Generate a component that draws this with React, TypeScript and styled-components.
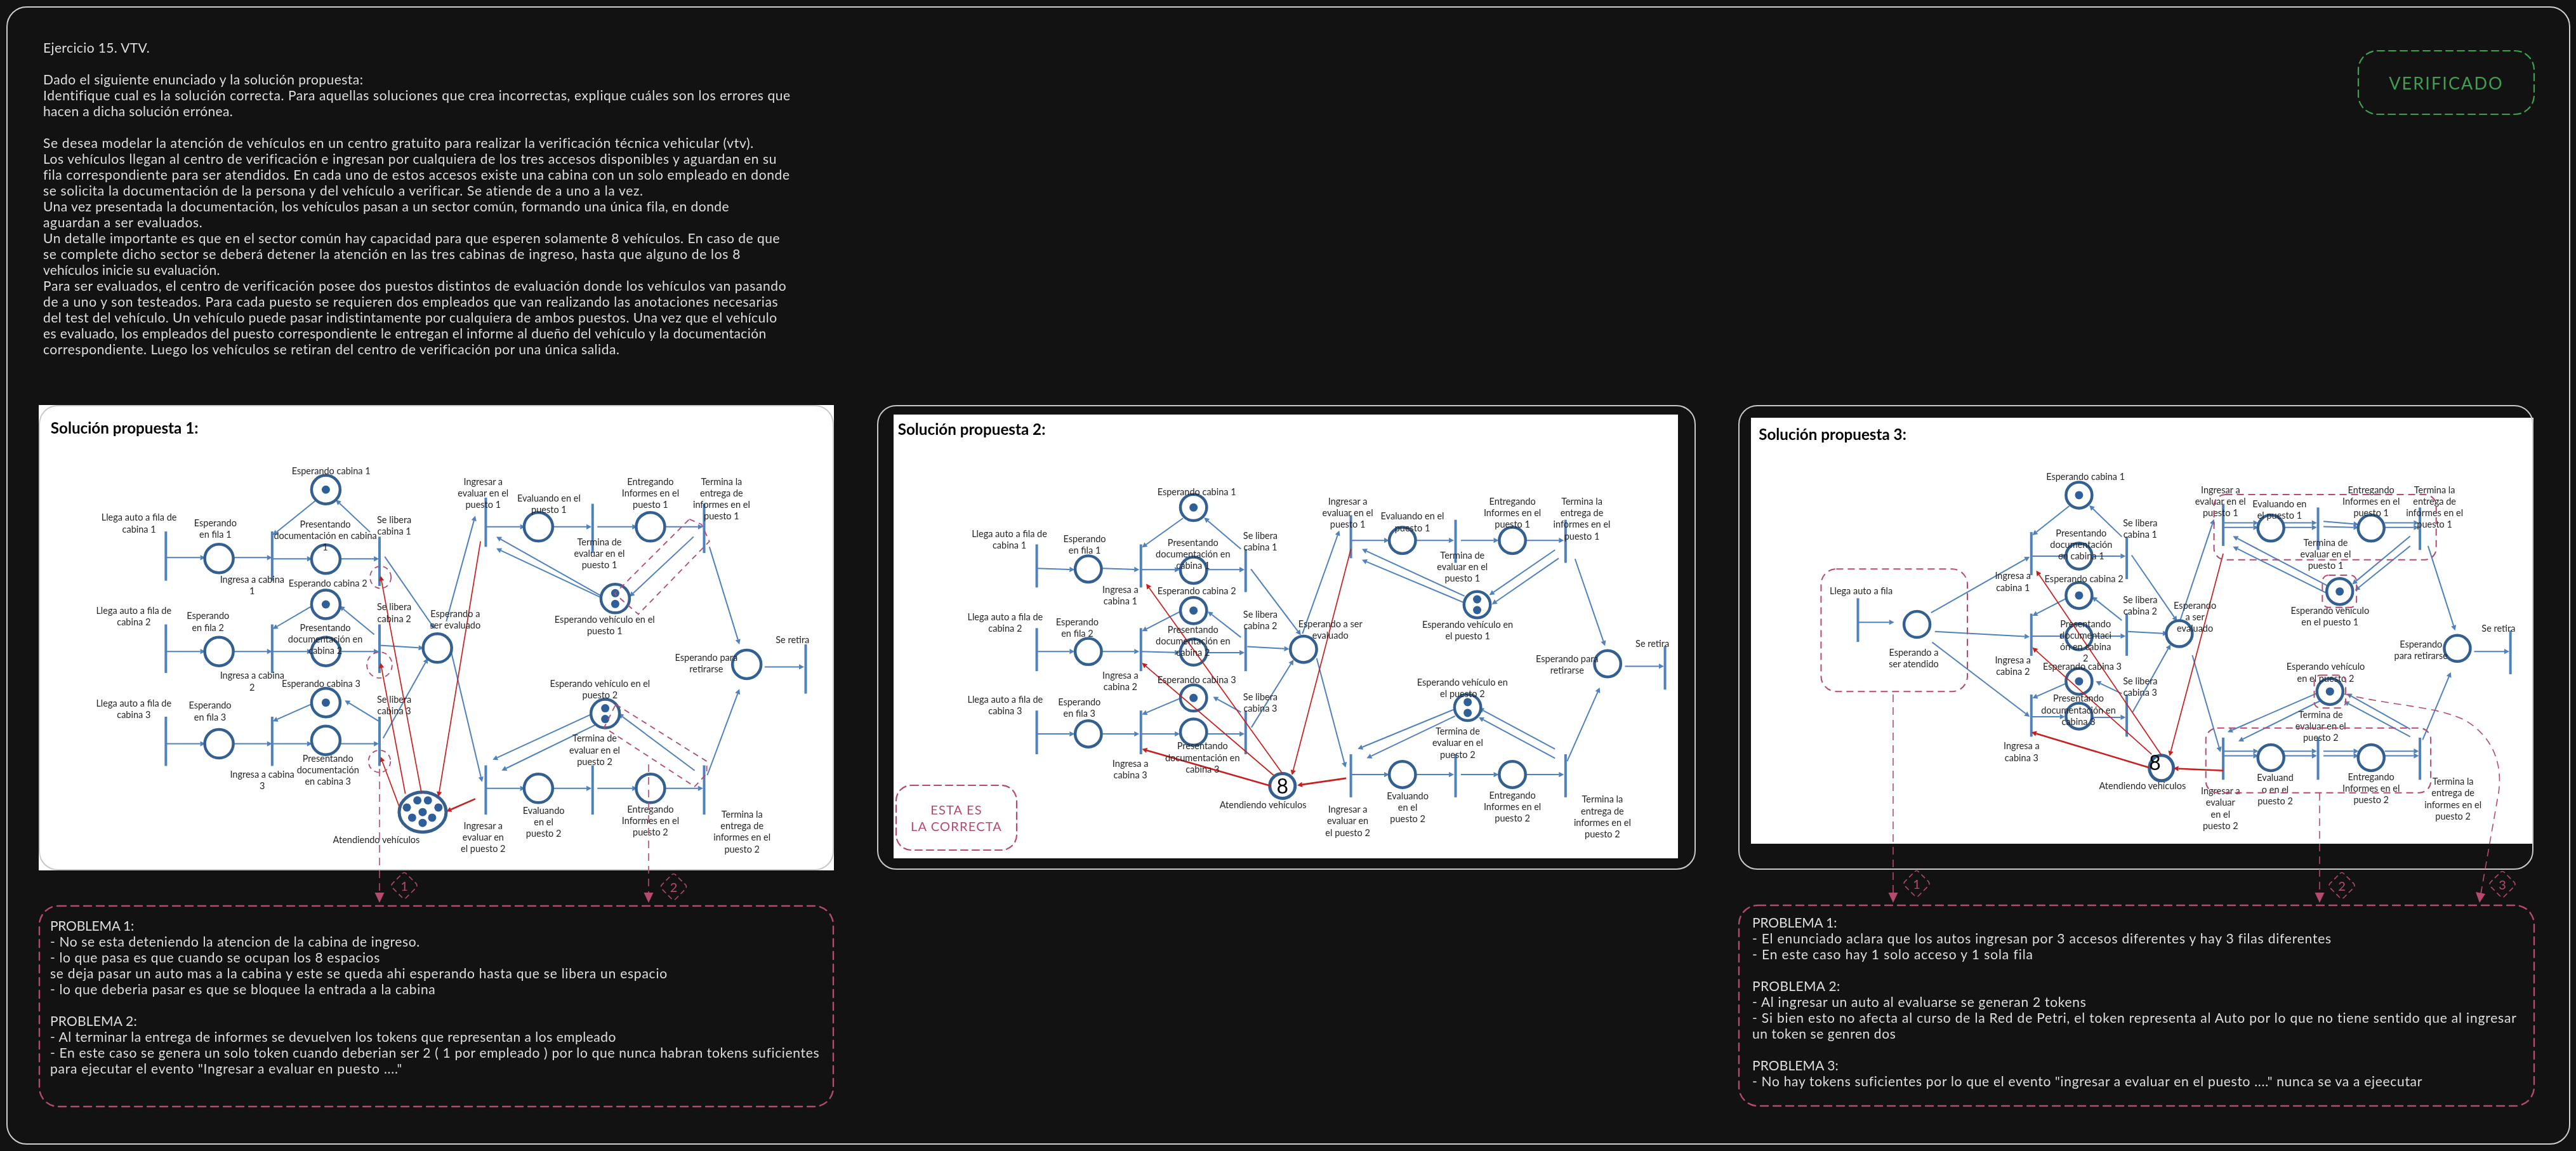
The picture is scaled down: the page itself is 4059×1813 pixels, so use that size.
import React from "react";
import styled, { createGlobalStyle } from "styled-components";

const INK = "#dedede";
const PINK = "#b54a70";
const GREEN = "#3d9f50";
const HAND = `Lato, "Open Sans", sans-serif`;
const TEXT_SIZE = 21;

const Global = createGlobalStyle`
  html, body { margin: 0; padding: 0; background: #121212; }
  body { width: 4059px; height: 1813px; overflow: hidden; }
`;

const Page = styled.div`
  position: relative;
  width: 4059px;
  height: 1813px;
  padding: 10px;
  box-sizing: border-box;
  background: #121212;
  font-family: ${HAND};
`;
const Board = styled.main`
  box-sizing: border-box;
  width: 4040px;
  height: 1793px;
  padding: 50px 54px 0 49px;
  border: 2px solid #cfcfcf;
  border-radius: 32px;
`;
const TopRow = styled.header`
  display: flex;
  justify-content: space-between;
  align-items: flex-start;
  height: 500px;
  margin-bottom: 76px;
`;
const Statement = styled.section`
  padding-left: 7px;
  color: ${INK};
  will-change: transform;
`;
const TextLine = styled.div`
  font-size: ${TEXT_SIZE}px;
  line-height: 25px;
  min-height: 25px;
  white-space: pre;
`;
const Solutions = styled.div`
  display: grid;
  grid-template-columns: 1253px 1290px 1255px;
  column-gap: 67.5px;
  align-items: start;
`;
const Column = styled.div`
  display: flex;
  flex-direction: column;
  gap: 55px;
`;
const Card = styled.article<{ $pad: string; $h: number; $w?: number }>`
  position: relative;
  box-sizing: border-box;
  display: flex;
  height: ${(p) => p.$h}px;
  width: ${(p) => (p.$w ? `${p.$w}px` : "100%")};
  padding: ${(p) => p.$pad};
  &::after {
    content: "";
    position: absolute;
    inset: 0;
    border: 2px solid #c9c9c9;
    border-radius: 30px;
    pointer-events: none;
  }
`;
const Sheet = styled.div`
  flex: 1;
  background: #ffffff;
  overflow: hidden;
`;
const NetSvg = styled.svg`
  display: block;
`;
const NetLayer = styled.g`
  filter: blur(0.55px);
`;
const NetLabel = styled.text`
  font-family: Lato, sans-serif;
  font-size: 14.5px;
  fill: #262626;
  text-anchor: middle;
  dominant-baseline: central;
`;
const NetTitle = styled.text`
  font-family: Lato, sans-serif;
  font-size: 24.2px;
  font-weight: 700;
  fill: #000;
  dominant-baseline: central;
`;
const BigEight = styled.text`
  font-family: Lato, sans-serif;
  font-size: 32px;
  fill: #000;
  text-anchor: middle;
  dominant-baseline: central;
`;
const OutlineSvg = styled.svg`
  position: absolute;
  top: 0;
  left: 0;
  overflow: visible;
`;
const ProblemBox = styled.section<{ $padTop: number; $padLeft: number }>`
  position: relative;
  box-sizing: border-box;
  height: 318px;
  padding: ${(p) => p.$padTop}px 8px 0 ${(p) => p.$padLeft}px;
  color: ${INK};
  will-change: transform;
`;
const Verified = styled.div`
  position: relative;
  box-sizing: border-box;
  width: 279px;
  height: 102px;
  margin-top: 17px;
  display: flex;
  align-items: center;
  justify-content: center;
  color: ${GREEN};
  font-size: 27px;
  font-weight: 400;
  letter-spacing: 2.1px;
  will-change: transform;
`;
const Correct = styled.div`
  position: absolute;
  left: 3px;
  bottom: 12px;
  box-sizing: border-box;
  width: 192px;
  height: 104px;
  display: flex;
  flex-direction: column;
  align-items: center;
  justify-content: center;
  color: ${PINK};
  font-size: 20px;
  font-weight: 400;
  line-height: 26px;
  letter-spacing: 1.2px;
  will-change: transform;
`;
const CorrectBody = styled.div`
  position: relative;
  flex: 1;
  display: flex;
`;
const OverlaySvg = styled.svg`
  position: absolute;
  top: 0;
  left: 0;
  pointer-events: none;
`;
const BadgeDigit = styled.text`
  font-family: ${HAND};
  font-size: 20px;
  fill: ${PINK};
  text-anchor: middle;
  dominant-baseline: central;
`;

/* ---------- dashed rounded outline, a drawing that sits over its box ---------- */
function DashedOutline({ w, h, color, r = 30, width = 2.4, dash = "12 8" }: { w: number; h: number; color: string; r?: number; width?: number; dash?: string }) {
  return (
    <OutlineSvg width={w} height={h} viewBox={`0 0 ${w} ${h}`}>
      <rect x={1} y={1} width={w - 2} height={h - 2} rx={r} fill="none" stroke={color} strokeWidth={width} strokeDasharray={dash} strokeLinecap="round" />
    </OutlineSvg>
  );
}

/* ---------- Petri nets. All measures are read off 1568-wide crops of each sheet ---------- */
type Pt = [number, number];
interface Net {
  title: string;
  titleAt: Pt;
  ox: number;
  oy: number;
  fx: number;
  sheet: [number, number, number, number];
  r: number;
  bars: [number, number, number][];
  places: [number, number, number?][];
  blue: [number, number, number, number][];
  red: [number, number, number, number, number?][];
  labels: [number, number, string][];
  pool: { cx: number; cy: number; rx: number; ry: number; tokens?: Pt[]; eight?: Pt };
}
const FY = 760 / 1568;

const net1: Net = {
  title: "Solución propuesta 1:", titleAt: [48, 110], ox: 40, oy: 620, fx: 1300 / 1568, sheet: [61, 638, 1253, 733], r: 22.5,
  bars: [[267,448,608],[267,750,908],[267,1050,1210],[469,448,608],[469,750,908],[469,1050,1210],[673,465,625],[673,750,908],[673,1050,1210],[875,338,498],[875,1208,1368],[1078,358,518],[1078,1208,1368],[1290,358,518],[1290,1208,1368],[1483,815,975]],
  places: [[368,536],[368,838],[368,1138],[571,312,1],[571,538],[571,685,1],[571,838],[571,1004,1],[571,1127],[783,827],[975,433],[1188,433],[1121,666,2],[1371,880],[975,1283],[1188,1283],[1102,1040,2]],
  blue: [[267,533,342,533],[395,533,469,533],[469,537,545,537],[597,537,672,537],[552,347,470,460],[655,450,590,345],[683,530,778,765],
    [267,838,342,838],[395,838,469,838],[469,838,545,838],[597,838,672,838],[545,690,470,765],[663,783,597,690],[673,818,757,827],
    [267,1138,342,1138],[395,1138,469,1138],[469,1138,545,1138],[597,1138,672,1138],[545,1008,470,1065],[672,1065,607,997],[680,1120,765,860],
    [800,740,855,397],[808,830,868,1262],[875,433,950,433],[1002,433,1076,433],[1087,433,1163,433],[1215,433,1288,433],
    [1097,660,895,465],[1097,665,895,503],[1270,465,1148,660],[1300,498,1357,815],[1405,888,1480,888],
    [875,1283,950,1283],[1002,1283,1076,1283],[1087,1283,1163,1283],[1215,1283,1288,1283],
    [1078,1040,888,1190],[1085,1075,905,1225],[1272,1225,1127,1040],[1296,1240,1357,960]],
  red: [[753,1300,675,592],[722,1300,675,875],[710,1340,675,1180],[865,480,785,1310],[855,1317,800,1358,1]],
  labels: [[581,250,"Esperando cabina 1"],[216,402,"Llega auto a fila de|cabina 1"],[361,420,"Esperando|en fila 1"],[570,424,"Presentando|documentación en cabina|1"],[701,410,"Se libera|cabina 1"],[431,604,"Ingresa a cabina|1"],[575,615,"Esperando cabina 2"],[206,704,"Llega auto a fila de|cabina 2"],[347,722,"Esperando|en fila 2"],[570,760,"Presentando|documentación en|cabina 2"],[701,693,"Se libera|cabina 2"],[431,916,"Ingresa a cabina|2"],[562,941,"Esperando cabina 3"],[206,1005,"Llega auto a fila de|cabina 3"],[351,1013,"Esperando|en fila 3"],[701,994,"Se libera|cabina 3"],[575,1185,"Presentando|documentación|en cabina 3"],[450,1237,"Ingresa a cabina|3"],[667,1449,"Atendiendo vehículos"],[817,715,"Esperando a|ser evaluado"],[870,285,"Ingresar a|evaluar en el|puesto 1"],[995,339,"Evaluando en el|puesto 1"],[1188,285,"Entregando|Informes en el|puesto 1"],[1323,285,"Termina la|entrega de|informes en el|puesto 1"],[1091,481,"Termina de|evaluar en el|puesto 1"],[1101,733,"Esperando vehículo en el|puesto 1"],[1294,857,"Esperando para|retirarse"],[1458,800,"Se retira"],[1092,942,"Esperando vehículo en el|puesto 2"],[1082,1120,"Termina de|evaluar en el|puesto 2"],[985,1354,"Evaluando|en el|puesto 2"],[1188,1350,"Entregando|Informes en el|puesto 2"],[870,1403,"Ingresar a|evaluar en|el puesto 2"],[1362,1367,"Termina la|entrega de|informes en el|puesto 2"]],
  pool: { cx: 755, cy: 1360, rx: 37, ry: 31.5, tokens: [[725,1345],[745,1322],[765,1322],[785,1345],[755,1360],[735,1378],[773,1378],[755,1395]] },
};

const net2: Net = {
  title: "Solución propuesta 2:", titleAt: [66, 115], ox: 1360, oy: 620, fx: 1300 / 1568, sheet: [1408, 653, 1236, 699], r: 20.7,
  bars: [[330,490,630],[330,762,902],[330,1030,1172],[528,490,630],[528,762,902],[528,1030,1172],[727,505,645],[727,762,902],[727,1030,1172],[927,395,535],[927,1172,1312],[1126,410,550],[1126,1172,1312],[1335,410,550],[1335,1172,1312],[1524,820,962]],
  places: [[428,570],[428,838],[428,1106],[628,370,1],[628,574],[628,705,1],[628,840],[628,989,1],[628,1100],[837,831],[1025,477],[1234,477],[1167,686,2],[1415,878],[1025,1238],[1234,1238],[1149,1020,2]],
  blue: [[330,568,402,572],[455,568,525,572],[528,572,602,572],[655,572,725,572],[608,405,530,500],[718,505,648,403],[737,570,832,785],
    [330,838,402,838],[455,838,525,838],[528,838,602,842],[655,842,725,842],[603,708,530,772],[718,792,655,708],[730,822,810,830],
    [330,1106,402,1106],[455,1106,525,1106],[528,1106,602,1106],[655,1106,725,1106],[603,990,530,1043],[718,1035,665,985],[738,1085,818,865],
    [835,780,905,445],[862,860,917,1215],[927,477,1000,477],[1052,477,1123,477],[1136,477,1208,477],[1260,477,1332,477],
    [1143,658,948,505],[1143,680,948,540],[1315,508,1190,655],[1322,535,1195,685],[1353,537,1410,820],[1448,886,1522,886],
    [927,1238,1000,1238],[1052,1238,1123,1238],[1136,1238,1208,1238],[1260,1238,1332,1238],
    [1125,1025,940,1155],[1125,1048,957,1185],[1315,1155,1170,1022],[1315,1185,1170,1052],[1338,1195,1400,955]],
  red: [[797,1235,538,618],[780,1240,530,875],[775,1275,530,1155,1],[927,505,815,1240],[918,1250,825,1273,1]],
  labels: [[634,318,"Esperando cabina 1"],[278,455,"Llega auto a fila de|cabina 1"],[421,471,"Esperando|en fila 1"],[627,483,"Presentando|documentación en|cabina 1"],[755,461,"Se libera|cabina 1"],[489,636,"Ingresa a|cabina 1"],[634,640,"Esperando cabina 2"],[270,725,"Llega auto a fila de|cabina 2"],[407,741,"Esperando|en fila 2"],[627,766,"Presentando|documentación en|cabina 2"],[755,716,"Se libera|cabina 2"],[489,915,"Ingresa a|cabina 2"],[634,929,"Esperando cabina 3"],[270,994,"Llega auto a fila de|cabina 3"],[411,1001,"Esperando|en fila 3"],[755,985,"Se libera|cabina 3"],[645,1145,"Presentando|documentación en|cabina 3"],[508,1201,"Ingresa a|cabina 3"],[760,1335,"Atendiendo vehículos"],[888,747,"Esperando a ser|evaluado"],[921,350,"Ingresar a|evaluar en el|puesto 1"],[1044,398,"Evaluando en el|puesto 1"],[1234,350,"Entregando|Informes en el|puesto 1"],[1366,350,"Termina la|entrega de|informes en el|puesto 1"],[1139,525,"Termina de|evaluar en el|puesto 1"],[1149,750,"Esperando vehículo en|el puesto 1"],[1338,862,"Esperando para|retirarse"],[1500,811,"Se retira"],[1139,937,"Esperando vehículo en|el puesto 2"],[1130,1097,"Termina de|evaluar en el|puesto 2"],[1035,1306,"Evaluando|en el|puesto 2"],[1234,1304,"Entregando|Informes en el|puesto 2"],[921,1351,"Ingresar a|evaluar en|el puesto 2"],[1405,1318,"Termina la|entrega de|informes en el|puesto 2"]],
  pool: { cx: 797, cy: 1275, rx: 20, ry: 19.5, eight: [797, 1273] },
};

const net3: Net = {
  title: "Solución propuesta 3:", titleAt: [60, 130], ox: 2720, oy: 620, fx: 1339 / 1568, sheet: [2759, 658, 1233, 671], r: 20.5,
  bars: [[243,665,807],[563,450,590],[563,715,852],[563,978,1115],[739,465,603],[739,715,852],[739,978,1115],[917,358,495],[917,1118,1255],[1092,370,508],[1092,1118,1255],[1280,370,508],[1280,1118,1255],[1447,770,912]],
  places: [[352,750],[651,330,1],[651,528],[651,656,1],[651,790],[651,935,1],[651,1048],[836,780],[1005,437],[1190,437],[1132,643,1],[1349,828],[1005,1183],[1190,1183],[1114,968,1]],
  blue: [[243,743,310,743],[378,712,560,530],[385,773,560,790],[380,808,560,1050],[563,528,628,528],[672,528,737,528],[633,365,565,460],[730,465,670,363],[748,525,832,740],
    [563,788,625,788],[672,788,737,788],[628,665,565,722],[730,737,675,660],[741,773,815,780],
    [563,1050,625,1050],[672,1052,737,1052],[632,938,565,990],[730,975,682,935],[750,1035,820,815],
    [838,735,900,408],[860,850,912,1165],
    [917,420,982,420],[917,435,982,435],[1027,420,1090,420],[1027,435,1090,435],[1102,415,1167,425],[1102,432,1167,435],[1215,420,1278,420],[1215,435,1278,435],
    [1110,625,935,463],[1110,650,935,497],[1262,463,1155,620],[1262,495,1160,640],[1295,495,1345,770],[1380,838,1445,838],
    [917,1162,982,1162],[917,1177,982,1177],[1027,1162,1090,1162],[1027,1177,1090,1177],[1102,1162,1167,1162],[1102,1177,1167,1177],[1215,1162,1278,1162],[1215,1177,1278,1177],
    [1095,970,925,1100],[1100,995,945,1130],[1262,1090,1145,975],[1262,1115,1140,1000],[1285,1125,1337,905]],
  red: [[803,1175,572,575],[785,1172,565,825],[780,1215,563,1100,1],[917,520,818,1178],[917,1225,825,1218,1]],
  labels: [[663,270,"Esperando cabina 1"],[249,640,"Llega auto a fila"],[346,841,"Esperando a|ser atendido"],[655,452,"Presentando|documentación|en cabina 1"],[764,420,"Se libera|cabina 1"],[529,592,"Ingresa a|cabina 1"],[660,601,"Esperando cabina 2"],[764,669,"Se libera|cabina 2"],[663,747,"Presentando|documentaci|ón en cabina|2"],[529,865,"Ingresa a|cabina 2"],[657,886,"Esperando cabina 3"],[764,933,"Se libera|cabina 3"],[650,990,"Presentando|documentación en|cabina 3"],[545,1145,"Ingresa a|cabina 3"],[768,1275,"Atendiendo vehículos"],[865,688,"Esperando|a ser|evaluado"],[912,312,"Ingresar a|evaluar en el|puesto 1"],[1021,358,"Evaluando en|el puesto 1"],[1190,312,"Entregando|Informes en el|puesto 1"],[1307,312,"Termina la|entrega de|informes en el|puesto 1"],[1106,483,"Termina de|evaluar en el|puesto 1"],[1114,705,"Esperando vehículo|en el puesto 1"],[1282,813,"Esperando|para retirarse"],[1425,762,"Se retira"],[1106,887,"Esperando vehículo|en el puesto 2"],[1097,1042,"Termina de|evaluar en el|puesto 2"],[1013,1248,"Evaluand|o en el|puesto 2"],[1190,1245,"Entregando|Informes en el|puesto 2"],[912,1291,"Ingresar a|evaluar|en el|puesto 2"],[1341,1260,"Termina la|entrega de|informes en el|puesto 2"]],
  pool: { cx: 803, cy: 1217, rx: 19, ry: 20, eight: [791, 1197] },
};

function ArrowLine({ a, b, color, width, head }: { a: Pt; b: Pt; color: string; width: number; head: number }) {
  const dx = b[0] - a[0];
  const dy = b[1] - a[1];
  const len = Math.hypot(dx, dy) || 1;
  const ux = dx / len;
  const uy = dy / len;
  const bx = b[0] - ux * head;
  const by = b[1] - uy * head;
  const hw = head * 0.52;
  return (
    <g>
      <line x1={a[0]} y1={a[1]} x2={bx} y2={by} stroke={color} strokeWidth={width} />
      <polygon points={`${b[0]},${b[1]} ${bx - uy * hw},${by + ux * hw} ${bx + uy * hw},${by - ux * hw}`} fill={color} />
    </g>
  );
}

function PetriNet({ net }: { net: Net }) {
  const X = (x: number) => net.ox + x * net.fx;
  const Y = (y: number) => net.oy + y * FY;
  const P = (x: number, y: number): Pt => [X(x), Y(y)];
  const [sx, sy, sw, sh] = net.sheet;
  const STEP = 37.5 * FY;
  return (
    <NetSvg width={sw} height={sh} viewBox={`${sx} ${sy} ${sw} ${sh}`}>
      <NetLayer>
        {net.bars.map(([x, a, b], i) => (
          <line key={i} x1={X(x)} y1={Y(a)} x2={X(x)} y2={Y(b)} stroke="#4f81bd" strokeWidth={4} />
        ))}
        {net.blue.map(([a, b, c, d], i) => (
          <ArrowLine key={i} a={P(a, b)} b={P(c, d)} color="#4f81bd" width={2} head={8} />
        ))}
        {net.places.map(([x, y, t], i) => (
          <g key={i}>
            <circle cx={X(x)} cy={Y(y)} r={net.r} fill="#fff" stroke="#335f91" strokeWidth={4.5} />
            {t === 1 && <circle cx={X(x)} cy={Y(y)} r={6.5} fill="#2f5f99" />}
            {t === 2 && (
              <>
                <circle cx={X(x)} cy={Y(y) - 8.5} r={6.5} fill="#2f5f99" />
                <circle cx={X(x)} cy={Y(y) + 8.5} r={6.5} fill="#2f5f99" />
              </>
            )}
          </g>
        ))}
        <ellipse cx={X(net.pool.cx)} cy={Y(net.pool.cy)} rx={net.pool.rx} ry={net.pool.ry} fill="#fff" stroke="#335f91" strokeWidth={5} />
        {net.pool.tokens?.map(([x, y], i) => (
          <circle key={i} cx={X(x)} cy={Y(y)} r={6.5} fill="#2f5f99" />
        ))}
        {net.red.map(([a, b, c, d, thick], i) => (
          <ArrowLine key={i} a={P(a, b)} b={P(c, d)} color="#c81e1e" width={thick ? 2.6 : 1.7} head={8} />
        ))}
        {net.labels.map(([x, y, text], i) =>
          text.split("|").map((line, j) => (
            <NetLabel key={`${i}-${j}`} x={X(x)} y={Y(y) + j * STEP}>
              {line}
            </NetLabel>
          ))
        )}
        {net.pool.eight && (
          <BigEight x={X(net.pool.eight[0])} y={Y(net.pool.eight[1])}>
            8
          </BigEight>
        )}
        <NetTitle x={X(net.titleAt[0])} y={Y(net.titleAt[1])}>
          {net.title}
        </NetTitle>
      </NetLayer>
    </NetSvg>
  );
}

/* ---------- pink annotations drawn above the board ---------- */
function Diamond({ cx, cy, n }: { cx: number; cy: number; n: number }) {
  const rx = 21;
  const ry = 21;
  return (
    <g>
      <path
        d={`M${cx - 3} ${cy - ry + 2} Q${cx} ${cy - ry - 1} ${cx + 3} ${cy - ry + 2} L${cx + rx - 2} ${cy - 3} Q${cx + rx} ${cy} ${cx + rx - 2} ${cy + 3} L${cx + 3} ${cy + ry - 2} Q${cx} ${cy + ry + 1} ${cx - 3} ${cy + ry - 2} L${cx - rx + 2} ${cy + 3} Q${cx - rx} ${cy} ${cx - rx + 2} ${cy - 3} Z`}
        fill="none"
        stroke={PINK}
        strokeWidth={1.6}
        strokeDasharray="8 5"
      />
      <BadgeDigit x={cx} y={cy}>
        {n}
      </BadgeDigit>
    </g>
  );
}

function DropArrow({ x, from }: { x: number; from: number }) {
  return (
    <g>
      <line x1={x} y1={from} x2={x} y2={1408} stroke={PINK} strokeWidth={1.6} strokeDasharray="12 8" />
      <polygon points={`${x},1422 ${x - 7.5},1406 ${x + 7.5},1406`} fill={PINK} />
    </g>
  );
}

function Overlay() {
  const f1 = 1300 / 1568;
  const f3 = 1339 / 1568;
  const a = (x: number) => 40 + x * f1;
  const c = (x: number) => 2720 + x * f3;
  const y = (v: number) => 620 + v * FY;
  const ell = (cx: number, cy: number, rx: number, ry: number) => (
    <ellipse cx={a(cx)} cy={y(cy)} rx={rx * f1} ry={ry * FY} fill="none" stroke={PINK} strokeWidth={1.8} strokeDasharray="8 6" />
  );
  const poly = (pts: Pt[]) => (
    <path d={`M${pts.map(([px, py]) => `${a(px)} ${y(py)}`).join(" L")} Z`} fill="none" stroke={PINK} strokeWidth={1.8} strokeDasharray="9 7" strokeLinejoin="round" />
  );
  const box = (x1: number, y1: number, x2: number, y2: number, r: number) => (
    <rect x={c(x1)} y={y(y1)} width={(x2 - x1) * f3} height={(y2 - y1) * FY} rx={r} fill="none" stroke={PINK} strokeWidth={2} strokeDasharray="11 7" />
  );
  return (
    <OverlaySvg width={4059} height={1813} viewBox="0 0 4059 1813">
      {ell(675, 597, 20, 36)}
      {ell(673, 882, 24, 42)}
      {ell(673, 1195, 21, 36)}
      {poly([[1262, 408], [1285, 425], [1300, 480], [1165, 717], [1120, 650]])}
      {poly([[1122, 1010], [1295, 1195], [1295, 1235], [1272, 1277], [1100, 1085]])}
      <DropArrow x={598} from={1211} />
      <DropArrow x={1022} from={1204} />
      <Diamond cx={637} cy={1395} n={1} />
      <Diamond cx={1061.5} cy={1397} n={2} />

      {box(175, 570, 445, 968, 24)}
      {box(900, 328, 1310, 540, 18)}
      {box(1100, 590, 1163, 695, 10)}
      {box(885, 1087, 1300, 1297, 18)}
      {box(1085, 915, 1143, 1022, 10)}
      <DropArrow x={2983} from={1094} />
      <DropArrow x={3655} from={1249} />
      <path d="M3693 1093 C3770 1112 3840 1112 3885 1135 C3935 1165 3945 1215 3935 1260 L3909 1408" fill="none" stroke={PINK} strokeWidth={1.6} strokeDasharray="12 8" />
      <polygon points="3907,1422 3901,1405 3916,1408" fill={PINK} />
      <Diamond cx={3020} cy={1392} n={1} />
      <Diamond cx={3690} cy={1395} n={2} />
      <Diamond cx={3943} cy={1393} n={3} />
    </OverlaySvg>
  );
}

/* Each text line with the width it spans in the reference, so line ends land in the same place. */
type Line = [string, number];
const W1 = (right: number) => (right - 76) / 1.12;
const W5 = (right: number) => (right - 47) / 1.206;
const W6 = (right: number) => (right - 48) / 1.171;

const statement: Line[] = [
  ["Ejercicio 15. VTV.", W1(265)],
  ["", 0],
  ["Dado el siguiente enunciado y la solución propuesta:", W1(642)],
  ["Identifique cual es la solución correcta. Para aquellas soluciones que crea incorrectas, explique cuáles son los errores que", W1(1395)],
  ["hacen a dicha solución errónea.", W1(411)],
  ["", 0],
  ["Se desea modelar la atención de vehículos en un centro gratuito para realizar la verificación técnica vehicular (vtv).", W1(1333)],
  ["Los vehículos llegan al centro de verificación e ingresan por cualquiera de los tres accesos disponibles y aguardan en su", W1(1373)],
  ["fila correspondiente para ser atendidos. En cada uno de estos accesos existe una cabina con un solo empleado en donde", W1(1394)],
  ["se solicita la documentación de la persona y del vehículo a verificar. Se atiende de a uno a la vez.", W1(1138)],
  ["Una vez presentada la documentación, los vehículos pasan a un sector común, formando una única fila, en donde", W1(1288)],
  ["aguardan a ser evaluados.", W1(358)],
  ["Un detalle importante es que en el sector común hay capacidad para que esperen solamente 8 vehículos. En caso de que", W1(1378)],
  ["se complete dicho sector se deberá detener la atención en las tres cabinas de ingreso, hasta que alguno de los 8", W1(1308)],
  ["vehículos inicie su evaluación.", W1(388)],
  ["Para ser evaluados, el centro de verificación posee dos puestos distintos de evaluación donde los vehículos van pasando", W1(1390)],
  ["de a uno y son testeados. Para cada puesto se requieren dos empleados que van realizando las anotaciones necesarias", W1(1375)],
  ["del test del vehículo. Un vehículo puede pasar indistintamente por cualquiera de ambos puestos. Una vez que el vehículo", W1(1375)],
  ["es evaluado, los empleados del puesto correspondiente le entregan el informe al dueño del vehículo y la documentación", W1(1354)],
  ["correspondiente. Luego los vehículos se retiran del centro de verificación por una única salida.", W1(1095)],
];

const problems1: Line[] = [
  ["PROBLEMA 1:", W5(207)],
  ["- No se esta deteniendo la atencion de la cabina de ingreso.", W5(750)],
  ["- lo que pasa es que cuando se ocupan los 8 espacios", W5(674)],
  ["se deja pasar un auto mas a la cabina y este se queda ahi esperando hasta que se libera un espacio", W5(1222)],
  ["- lo que deberia pasar es que se bloquee la entrada a la cabina", W5(780)],
  ["", 0],
  ["PROBLEMA 2:", W5(213)],
  ["- Al terminar la entrega de informes se devuelven los tokens que representan a los empleado", W5(1124)],
  ["- En este caso se genera un solo token cuando deberian ser 2 ( 1 por empleado ) por lo que nunca habran tokens suficientes", W5(1510)],
  ["para ejecutar el evento \"Ingresar a evaluar en puesto ....\"", W5(718)],
];

const problems3: Line[] = [
  ["PROBLEMA 1:", W6(205)],
  ["- El enunciado aclara que los autos ingresan por 3 accesos diferentes y hay 3 filas diferentes", W6(1119)],
  ["- En este caso hay 1 solo acceso y 1 sola fila", W6(568)],
  ["", 0],
  ["PROBLEMA 2:", W6(211)],
  ["- Al ingresar un auto al evaluarse se generan 2 tokens", W6(666)],
  ["- Si bien esto no afecta al curso de la Red de Petri, el token representa al Auto por lo que no tiene sentido que al ingresar", W6(1461)],
  ["un token se genren dos", W6(313)],
  ["", 0],
  ["PROBLEMA 3:", W6(208)],
  ["- No hay tokens suficientes por lo que el evento \"ingresar a evaluar en el puesto ....\" nunca se va a ejeecutar", W6(1287)],
];

const ruler = typeof document !== "undefined" ? document.createElement("canvas").getContext("2d") : null;
function spacingFor(text: string, target: number) {
  if (!ruler || !text) return 0;
  ruler.font = `${TEXT_SIZE}px Lato`;
  return (target - ruler.measureText(text).width) / text.length;
}

const Lines = ({ lines }: { lines: Line[] }) => (
  <>
    {lines.map(([text, target], i) => (
      <TextLine key={i} style={{ letterSpacing: `${spacingFor(text, target).toFixed(3)}px` }}>
        {text}
      </TextLine>
    ))}
  </>
);

export default function App() {
  return (
    <Page>
      <Global />
      <Board>
        <TopRow>
          <Statement>
            <Lines lines={statement} />
          </Statement>
          <Verified>
            <DashedOutline w={279} h={102} color={GREEN} r={30} width={2.2} dash="11 7" />
            VERIFICADO
          </Verified>
        </TopRow>
        <Solutions>
          <Column>
            <Card $pad="0" $h={733}>
              <Sheet>
                <PetriNet net={net1} />
              </Sheet>
            </Card>
            <ProblemBox $padTop={18.5} $padLeft={18}>
              <DashedOutline w={1253} h={318} color={PINK} r={30} />
              <Lines lines={problems1} />
            </ProblemBox>
          </Column>
          <Column>
            <Card $pad="15px 27.5px 18px 26.5px" $h={732}>
              <Sheet>
                <CorrectBody>
                  <PetriNet net={net2} />
                  <Correct>
                    <DashedOutline w={192} h={104} color={PINK} r={24} width={2.2} dash="11 7" />
                    <span>ESTA ES</span>
                    <span>LA CORRECTA</span>
                  </Correct>
                </CorrectBody>
              </Sheet>
            </Card>
          </Column>
          <Column>
            <Card $pad="20px 0 41px 20px" $h={732} $w={1253}>
              <Sheet>
                <PetriNet net={net3} />
              </Sheet>
            </Card>
            <ProblemBox $padTop={14.5} $padLeft={22}>
              <DashedOutline w={1255} h={318} color={PINK} r={30} />
              <Lines lines={problems3} />
            </ProblemBox>
          </Column>
        </Solutions>
      </Board>
      <Overlay />
    </Page>
  );
}
